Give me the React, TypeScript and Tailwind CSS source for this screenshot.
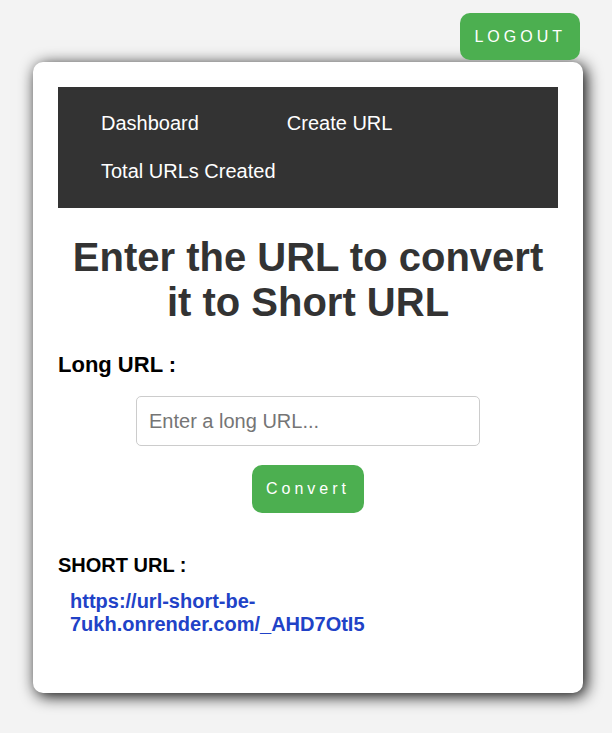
export default function App() {
  return (
    <div className="min-h-screen bg-[#f3f3f3] pt-[13px] pr-[29px] pb-10 pl-[33px] font-['Liberation_Sans',Arial,sans-serif]">
      <div className="relative z-10 mb-[2px] flex justify-end pr-[3px]">
        <button className="h-[47px] rounded-[10px] bg-[#4caf50] px-[14px] text-base tracking-[4px] text-white">LOGOUT</button>
      </div>
      <main className="mx-auto max-w-[550px] rounded-[10px] bg-white px-[25px] pt-[25px] pb-[57px] shadow-[3px_3px_16px_#000]">
        <nav className="flex flex-wrap bg-[#333] px-[43px] pt-3 pb-[13px] text-xl text-white">
          <a href="#dashboard" className="mr-[88px] py-[9px] leading-[30px]">Dashboard</a>
          <a href="#create" className="py-[9px] leading-[30px]">Create URL</a>
          <a href="#total" className="py-[9px] leading-[30px]">Total URLs Created</a>
        </nav>
        <h1 className="mt-[27px] text-center text-[40px] leading-[45px] font-bold text-[#333]">Enter the URL to convert it to Short URL</h1>
        <form className="mt-[25px]" onSubmit={(e) => e.preventDefault()}>
          <label htmlFor="long-url" className="block text-[22px] leading-[30px] font-bold">Long URL :</label>
          <input id="long-url" type="text" placeholder="Enter a long URL..." className="mx-auto mt-4 block h-[50px] w-[344px] rounded-[5px] border border-[#ccc] px-3 text-xl placeholder:text-[#757575]" />
          <button className="mx-auto mt-[19px] block h-12 rounded-[10px] bg-[#4caf50] px-[14px] text-base tracking-[4px] text-white">Convert</button>
        </form>
        <h2 className="mt-10 text-xl leading-6 font-bold">SHORT URL :</h2>
        <a href="#short" className="mt-[13px] ml-3 block w-[300px] text-xl leading-[23px] font-bold text-[#2142c7]">https://url-short-be-7ukh.onrender.com/_AHD7OtI5</a>
      </main>
    </div>
  );
}
